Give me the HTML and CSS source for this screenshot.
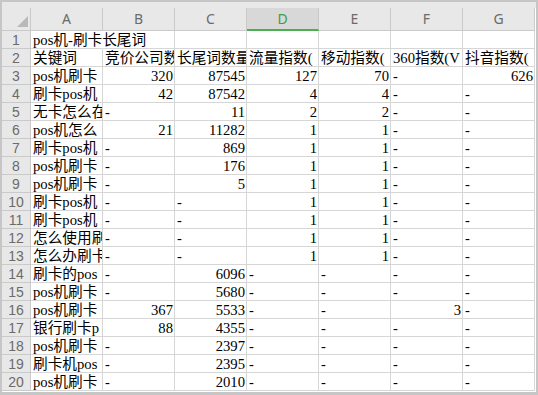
FILE: index.html
```html
<!DOCTYPE html>
<html lang="zh-CN">
<head>
    <meta charset="UTF-8">
    <title>pos机-刷卡长尾词</title>
    <link rel="stylesheet" href="styles.css">
</head>
<body>
    <div class="frame">
        <div class="top-strip"></div>
        <div class="sheet">
            <div class="corner"><span class="tri"></span></div>
            <div class="col-head">A</div>
            <div class="col-head">B</div>
            <div class="col-head">C</div>
            <div class="col-head active">D</div>
            <div class="col-head">E</div>
            <div class="col-head">F</div>
            <div class="col-head">G</div>

            <div class="row-head">1</div>
            <div class="cell spill">pos机-刷卡长尾词</div>
            <div class="cell"></div><div class="cell"></div><div class="cell"></div><div class="cell"></div><div class="cell"></div><div class="cell"></div>

            <div class="row-head">2</div>
            <div class="cell">关键词</div>
            <div class="cell">竞价公司数</div>
            <div class="cell">长尾词数量</div>
            <div class="cell">流量指数(</div>
            <div class="cell">移动指数(</div>
            <div class="cell">360指数(V</div>
            <div class="cell">抖音指数(</div>

            <div class="row-head">3</div>
            <div class="cell">pos机刷卡</div>
            <div class="cell num">320</div>
            <div class="cell num">87545</div>
            <div class="cell num">127</div>
            <div class="cell num">70</div>
            <div class="cell">-</div>
            <div class="cell num">626</div>

            <div class="row-head">4</div>
            <div class="cell">刷卡pos机</div>
            <div class="cell num">42</div>
            <div class="cell num">87542</div>
            <div class="cell num">4</div>
            <div class="cell num">4</div>
            <div class="cell">-</div>
            <div class="cell">-</div>

            <div class="row-head">5</div>
            <div class="cell">无卡怎么在</div>
            <div class="cell">-</div>
            <div class="cell num">11</div>
            <div class="cell num">2</div>
            <div class="cell num">2</div>
            <div class="cell">-</div>
            <div class="cell">-</div>

            <div class="row-head">6</div>
            <div class="cell">pos机怎么</div>
            <div class="cell num">21</div>
            <div class="cell num">11282</div>
            <div class="cell num">1</div>
            <div class="cell num">1</div>
            <div class="cell">-</div>
            <div class="cell">-</div>

            <div class="row-head">7</div>
            <div class="cell">刷卡pos机</div>
            <div class="cell">-</div>
            <div class="cell num">869</div>
            <div class="cell num">1</div>
            <div class="cell num">1</div>
            <div class="cell">-</div>
            <div class="cell">-</div>

            <div class="row-head">8</div>
            <div class="cell">pos机刷卡</div>
            <div class="cell">-</div>
            <div class="cell num">176</div>
            <div class="cell num">1</div>
            <div class="cell num">1</div>
            <div class="cell">-</div>
            <div class="cell">-</div>

            <div class="row-head">9</div>
            <div class="cell">pos机刷卡</div>
            <div class="cell">-</div>
            <div class="cell num">5</div>
            <div class="cell num">1</div>
            <div class="cell num">1</div>
            <div class="cell">-</div>
            <div class="cell">-</div>

            <div class="row-head">10</div>
            <div class="cell">刷卡pos机</div>
            <div class="cell">-</div>
            <div class="cell">-</div>
            <div class="cell num">1</div>
            <div class="cell num">1</div>
            <div class="cell">-</div>
            <div class="cell">-</div>

            <div class="row-head">11</div>
            <div class="cell">刷卡pos机</div>
            <div class="cell">-</div>
            <div class="cell">-</div>
            <div class="cell num">1</div>
            <div class="cell num">1</div>
            <div class="cell">-</div>
            <div class="cell">-</div>

            <div class="row-head">12</div>
            <div class="cell">怎么使用刷</div>
            <div class="cell">-</div>
            <div class="cell">-</div>
            <div class="cell num">1</div>
            <div class="cell num">1</div>
            <div class="cell">-</div>
            <div class="cell">-</div>

            <div class="row-head">13</div>
            <div class="cell">怎么办刷卡</div>
            <div class="cell">-</div>
            <div class="cell">-</div>
            <div class="cell num">1</div>
            <div class="cell num">1</div>
            <div class="cell">-</div>
            <div class="cell">-</div>

            <div class="row-head">14</div>
            <div class="cell">刷卡的pos</div>
            <div class="cell">-</div>
            <div class="cell num">6096</div>
            <div class="cell">-</div>
            <div class="cell">-</div>
            <div class="cell">-</div>
            <div class="cell">-</div>

            <div class="row-head">15</div>
            <div class="cell">pos机刷卡</div>
            <div class="cell">-</div>
            <div class="cell num">5680</div>
            <div class="cell">-</div>
            <div class="cell">-</div>
            <div class="cell">-</div>
            <div class="cell">-</div>

            <div class="row-head">16</div>
            <div class="cell">pos机刷卡</div>
            <div class="cell num">367</div>
            <div class="cell num">5533</div>
            <div class="cell">-</div>
            <div class="cell">-</div>
            <div class="cell num">3</div>
            <div class="cell">-</div>

            <div class="row-head">17</div>
            <div class="cell">银行刷卡p</div>
            <div class="cell num">88</div>
            <div class="cell num">4355</div>
            <div class="cell">-</div>
            <div class="cell">-</div>
            <div class="cell">-</div>
            <div class="cell">-</div>

            <div class="row-head">18</div>
            <div class="cell">pos机刷卡</div>
            <div class="cell">-</div>
            <div class="cell num">2397</div>
            <div class="cell">-</div>
            <div class="cell">-</div>
            <div class="cell">-</div>
            <div class="cell">-</div>

            <div class="row-head">19</div>
            <div class="cell">刷卡机pos</div>
            <div class="cell">-</div>
            <div class="cell num">2395</div>
            <div class="cell">-</div>
            <div class="cell">-</div>
            <div class="cell">-</div>
            <div class="cell">-</div>

            <div class="row-head">20</div>
            <div class="cell">pos机刷卡</div>
            <div class="cell">-</div>
            <div class="cell num">2010</div>
            <div class="cell">-</div>
            <div class="cell">-</div>
            <div class="cell">-</div>
            <div class="cell">-</div>
        </div>
    </div>
</body>
</html>
```

FILE: styles.css
```css
body {
    margin: 0;
    background: white;
}

.frame {
    width: 538px;
    height: 395px;
    box-sizing: border-box;
    border-style: solid;
    border-color: #c6c6c6;
    border-width: 2px 2px 3px 2px;
    background: white;
    overflow: hidden;
}

.top-strip {
    height: 6px;
    background: #e8e8e8;
}

.sheet {
    display: grid;
    grid-template-columns: 29px repeat(7, 72px);
    grid-template-rows: 23px repeat(20, 18px);
}

.corner, .col-head, .row-head {
    background: #e8e8e8;
    box-sizing: border-box;
    border-right: 1px solid #cacaca;
    border-bottom: 1px solid #cacaca;
    color: #6b6b6b;
    font-family: "Noto Sans", "Liberation Sans", sans-serif;
    font-size: 14px;
}

.corner {
    display: flex;
    justify-content: flex-end;
    align-items: flex-end;
    padding: 0 2px 3px 0;
}

.corner .tri {
    width: 0;
    height: 0;
    border-left: 11px solid transparent;
    border-bottom: 11px solid #b9b9b9;
}

.col-head {
    text-align: center;
    line-height: 22px;
}

.col-head.active {
    background: #d8d8d8;
    color: #3c9d45;
    border-bottom: 2px solid #4cae50;
}

.row-head {
    font-family: "Liberation Sans", sans-serif;
    text-align: center;
    padding-top: 1px;
    line-height: 16px;
}

.cell {
    box-sizing: border-box;
    border-right: 1px solid #d6d6d6;
    border-bottom: 1px solid #d6d6d6;
    padding: 0.5px 1px 0 2px;
    font-family: "Liberation Serif", "Noto Sans CJK SC", serif;
    font-size: 14.67px;
    line-height: 16.5px;
    color: black;
    white-space: nowrap;
    overflow: hidden;
}

.cell.num {
    text-align: right;
}

/* text runs over the empty cell next to it, so no gridline there */
.cell.spill {
    overflow: visible;
    border-right-color: transparent;
}
```
